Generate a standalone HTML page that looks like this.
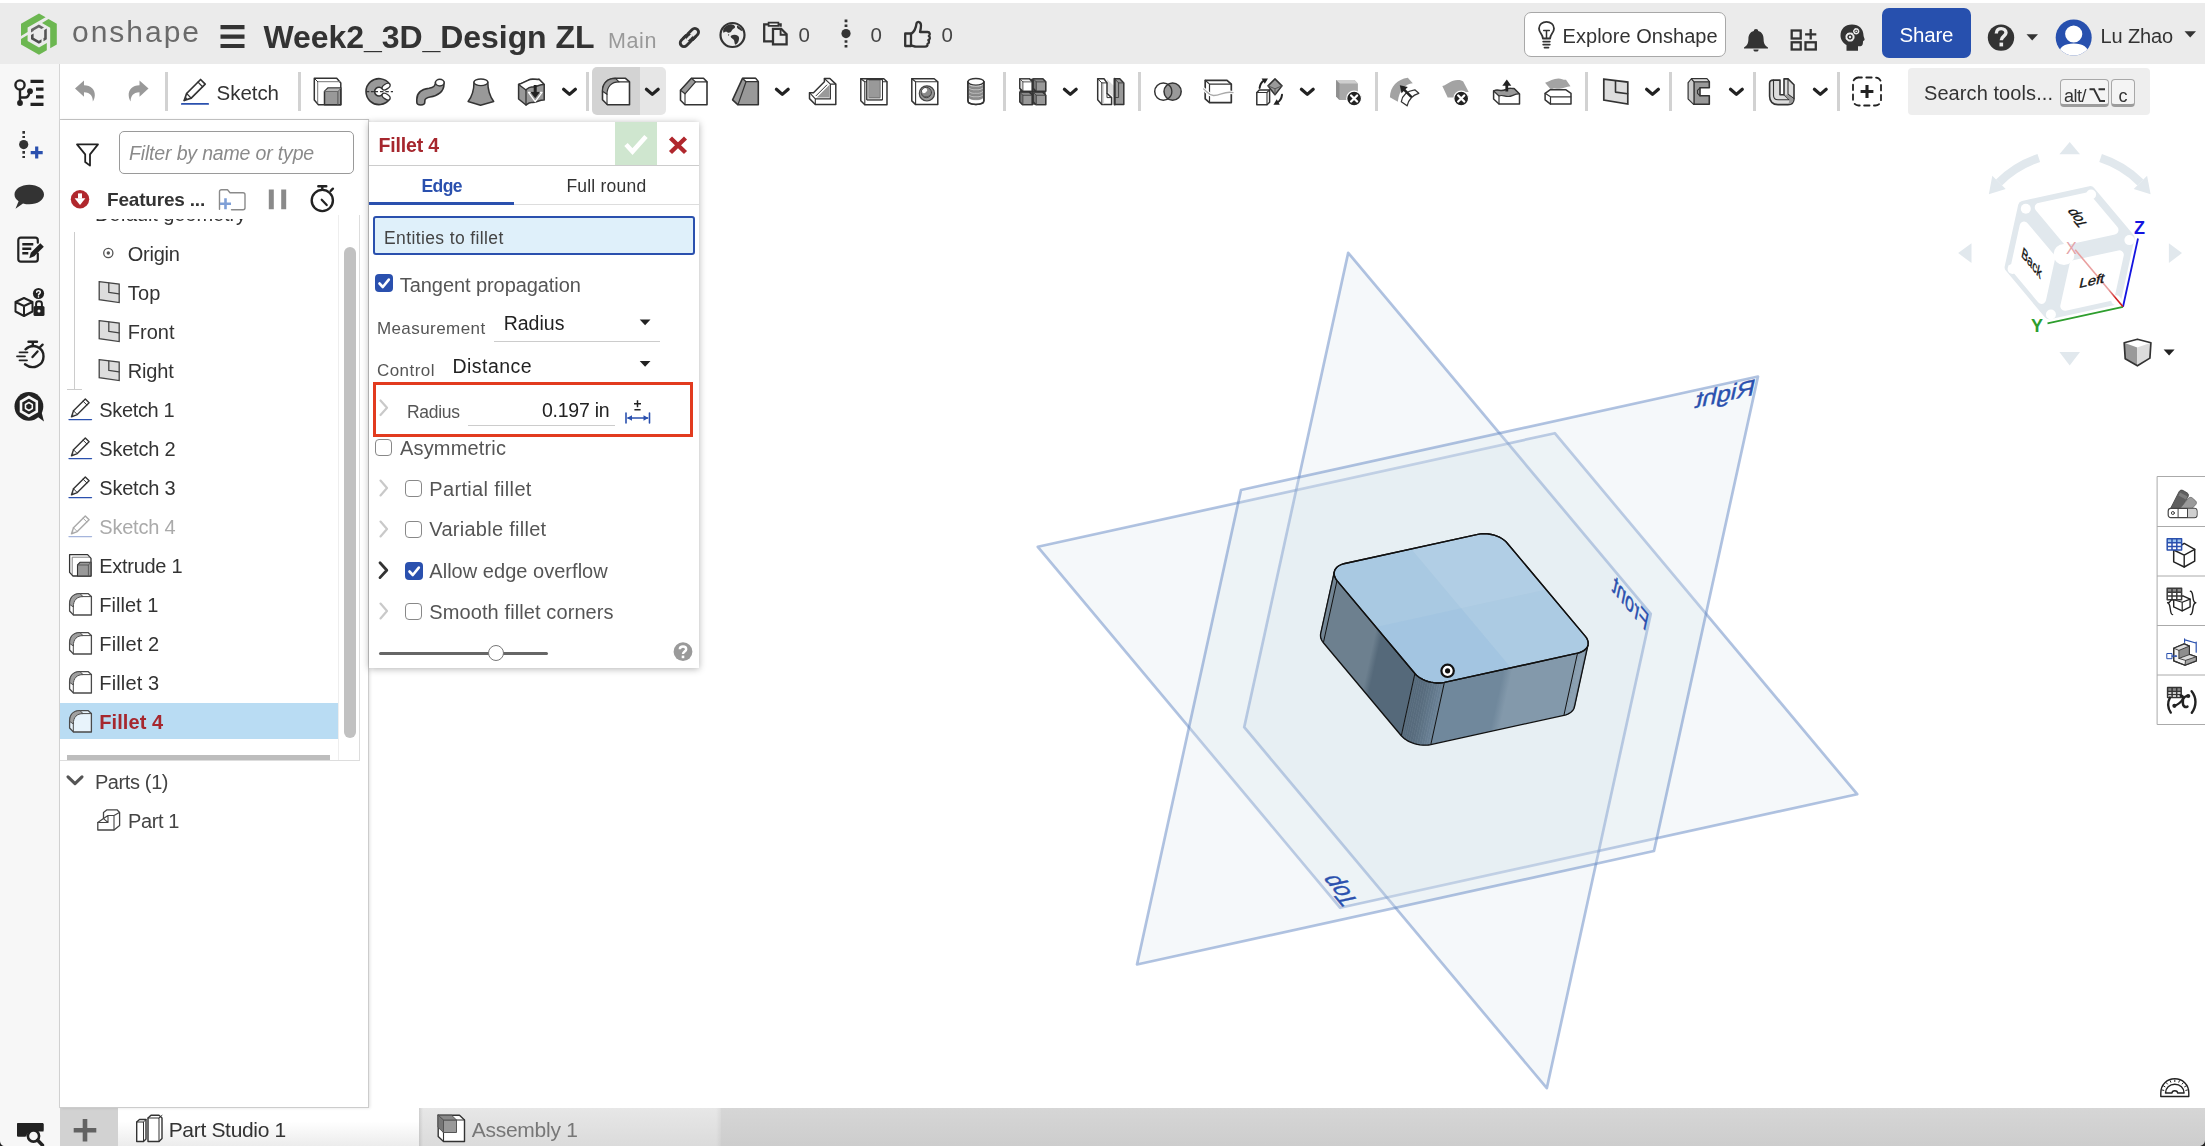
<!DOCTYPE html>
<html><head><meta charset="utf-8"><title>Onshape</title>
<style>
html,body{margin:0;padding:0}
body{width:2205px;height:1146px;position:relative;overflow:hidden;background:#fff;font-family:"Liberation Sans",sans-serif;color:#333}
.t{position:absolute;white-space:nowrap;line-height:1}
.a{position:absolute}
svg{position:absolute;left:0;top:0;overflow:visible}
.cb{position:absolute;width:15px;height:15px;border:1.5px solid #888;border-radius:4px;background:#fff}
.cbx{position:absolute;width:18px;height:18px;border-radius:4px;background:#2a50ae}
</style></head><body>
<!-- base layout -->
<div class="a" style="left:0;top:0;width:2205px;height:3px;background:#fff"></div>
<div class="a" style="left:0;top:3px;width:2205px;height:61px;background:#ebebeb"></div>
<div class="a" style="left:0;top:64px;width:60px;height:1082px;background:#f7f7f7"></div>
<div class="a" style="left:59px;top:64px;width:1px;height:1044px;background:#d6d6d6"></div>
<div class="a" style="left:60px;top:118.5px;width:309px;height:1.5px;background:#c8c8c8"></div>
<!-- bottom tab bar -->
<div class="a" style="left:60px;top:1108px;width:2145px;height:38px;background:linear-gradient(#d6d6d6,#cdcdcd)"></div>
<div class="a" style="left:60px;top:1107.5px;width:58px;height:38.5px;background:#d2d2d2"></div>
<div class="a" style="left:118px;top:1108px;width:301px;height:38px;background:linear-gradient(#fff 35%,#ececec)"></div>
<div class="a" style="left:419px;top:1108px;width:302px;height:38px;background:linear-gradient(90deg,rgba(0,0,0,.1) 0,rgba(0,0,0,0) 4px,rgba(0,0,0,0) 297px,rgba(0,0,0,.05) 302px),linear-gradient(#e7e7e7,#dbdbdb)"></div>
<!-- header widgets -->
<div class="a" style="left:1524px;top:12px;width:200px;height:43px;border:1px solid #a8a8a8;border-radius:7px;background:#fff"></div>
<div class="a" style="left:1882px;top:8px;width:89px;height:50px;border-radius:7px;background:#2750ae"></div>
<!-- toolbar: active fillet button + search box + separators -->
<div class="a" style="left:592px;top:67px;width:74px;height:48px;border-radius:5px;background:linear-gradient(90deg,#d3d3d3 0,#d3d3d3 48px,#e6e6e6 48px)"></div>
<div class="a" style="left:1908px;top:68px;width:242px;height:47px;border-radius:4px;background:#eee"></div>
<div class="a" style="left:2060px;top:79px;width:49px;height:28px;border:1px solid #a8a8a8;border-bottom:3px solid #9c9c9c;border-radius:4px;background:#f4f4f4;box-sizing:border-box"></div>
<div class="a" style="left:2110.5px;top:79px;width:24px;height:28px;border:1px solid #a8a8a8;border-bottom:3px solid #9c9c9c;border-radius:4px;background:#f4f4f4;box-sizing:border-box"></div>
<!-- toolbar separators -->
<div class="a" style="left:165.0px;top:72px;width:3px;height:39px;background:#d2d2d2"></div>
<div class="a" style="left:297.5px;top:72px;width:3px;height:39px;background:#d2d2d2"></div>
<div class="a" style="left:585.5px;top:72px;width:3px;height:39px;background:#d2d2d2"></div>
<div class="a" style="left:1002.5px;top:72px;width:3px;height:39px;background:#d2d2d2"></div>
<div class="a" style="left:1137.8px;top:72px;width:3px;height:39px;background:#d2d2d2"></div>
<div class="a" style="left:1374.9px;top:72px;width:3px;height:39px;background:#d2d2d2"></div>
<div class="a" style="left:1584.8px;top:72px;width:3px;height:39px;background:#d2d2d2"></div>
<div class="a" style="left:1669.0px;top:72px;width:3px;height:39px;background:#d2d2d2"></div>
<div class="a" style="left:1752.8px;top:72px;width:3px;height:39px;background:#d2d2d2"></div>
<div class="a" style="left:1836.6px;top:72px;width:3px;height:39px;background:#d2d2d2"></div>
<!-- 3D scene -->
<svg width="2205" height="1146" viewBox="0 0 2205 1146">
<defs>
</defs>
<path d="M1037.8,546.8 L1554.8,433.2 L1857.2,794.2 L1340.2,907.8Z" fill="rgba(214,227,235,0.255)" stroke="rgba(100,135,195,0.5)" stroke-width="2.7" stroke-linejoin="round"/>
<path d="M1348.2,252.8 L1650.8,613.8 L1546.8,1088.2 L1244.2,727.2Z" fill="rgba(214,227,235,0.255)" stroke="rgba(100,135,195,0.5)" stroke-width="2.7" stroke-linejoin="round"/>
<path d="M1241.0,490.0 L1758.0,376.5 L1654.0,851.0 L1137.0,964.5Z" fill="rgba(214,227,235,0.255)" stroke="rgba(100,135,195,0.5)" stroke-width="2.7" stroke-linejoin="round"/>
<text transform="matrix(-1.4822,-1.7689,2.5333,-0.5562,1360.0,902.9)" font-family="Liberation Sans,sans-serif" font-size="10" fill="#2a50ae" stroke="#2a50ae" stroke-width=".18">Top</text>
<text transform="matrix(-1.4822,-1.7689,-0.5096,2.3251,1646.3,631.8)" font-family="Liberation Sans,sans-serif" font-size="10" fill="#2a50ae" stroke="#2a50ae" stroke-width=".18">Front</text>
<text transform="matrix(-2.5333,0.5562,-0.5096,2.3251,1753.3,395.1)" font-family="Liberation Sans,sans-serif" font-size="10" fill="#2a50ae" stroke="#2a50ae" stroke-width=".18">Right</text>
<linearGradient id="gL" gradientUnits="userSpaceOnUse" x1="1337.0" y1="580.6" x2="1430.8" y2="601.1"><stop offset="0" stop-color="#6d808f"/><stop offset="0.505" stop-color="#6d808f"/><stop offset="0.575" stop-color="#55697a"/><stop offset="1" stop-color="#55697a"/></linearGradient>
<linearGradient id="gB" gradientUnits="userSpaceOnUse" x1="1444.4" y1="682.4" x2="1565.3" y2="708.9"><stop offset="0" stop-color="#70889c"/><stop offset="0.445" stop-color="#70889c"/><stop offset="0.515" stop-color="#8399ab"/><stop offset="1" stop-color="#8399ab"/></linearGradient>
<path d="M1337.0,580.6 L1414.9,673.5 L1401.3,735.7 L1323.4,642.7Z" fill="url(#gL)"/>
<path d="M1444.4,682.4 L1577.5,653.2 L1563.9,715.3 L1430.8,744.6Z" fill="url(#gB)"/>
<path d="M1334.3,571.8 L1334.2,572.4 L1320.5,634.5 L1320.6,633.9Z" fill="#8597a7" stroke="#8597a7" stroke-width=".6"/>
<path d="M1334.2,572.4 L1334.1,573.0 L1320.5,635.1 L1320.5,634.5Z" fill="#8395a5" stroke="#8395a5" stroke-width=".6"/>
<path d="M1334.1,573.0 L1334.1,573.6 L1320.5,635.8 L1320.5,635.1Z" fill="#8294a4" stroke="#8294a4" stroke-width=".6"/>
<path d="M1334.1,573.6 L1334.1,574.2 L1320.5,636.4 L1320.5,635.8Z" fill="#8092a2" stroke="#8092a2" stroke-width=".6"/>
<path d="M1334.1,574.2 L1334.2,574.9 L1320.6,637.0 L1320.5,636.4Z" fill="#7e90a0" stroke="#7e90a0" stroke-width=".6"/>
<path d="M1334.2,574.9 L1334.3,575.5 L1320.7,637.7 L1320.6,637.0Z" fill="#7c8f9e" stroke="#7c8f9e" stroke-width=".6"/>
<path d="M1334.3,575.5 L1334.5,576.1 L1320.9,638.3 L1320.7,637.7Z" fill="#7a8d9c" stroke="#7a8d9c" stroke-width=".6"/>
<path d="M1334.5,576.1 L1334.7,576.8 L1321.1,638.9 L1320.9,638.3Z" fill="#798b9b" stroke="#798b9b" stroke-width=".6"/>
<path d="M1334.7,576.8 L1335.0,577.4 L1321.4,639.6 L1321.1,638.9Z" fill="#778999" stroke="#778999" stroke-width=".6"/>
<path d="M1335.0,577.4 L1335.3,578.1 L1321.7,640.2 L1321.4,639.6Z" fill="#758897" stroke="#758897" stroke-width=".6"/>
<path d="M1335.3,578.1 L1335.7,578.7 L1322.1,640.9 L1321.7,640.2Z" fill="#738695" stroke="#738695" stroke-width=".6"/>
<path d="M1335.7,578.7 L1336.1,579.3 L1322.5,641.5 L1322.1,640.9Z" fill="#718493" stroke="#718493" stroke-width=".6"/>
<path d="M1336.1,579.3 L1336.6,580.0 L1322.9,642.1 L1322.5,641.5Z" fill="#708392" stroke="#708392" stroke-width=".6"/>
<path d="M1336.6,580.0 L1337.0,580.6 L1323.4,642.7 L1322.9,642.1Z" fill="#6e8190" stroke="#6e8190" stroke-width=".6"/>
<path d="M1414.9,673.5 L1416.2,674.9 L1402.6,737.1 L1401.3,735.7Z" fill="#55697a" stroke="#55697a" stroke-width=".6"/>
<path d="M1416.2,674.9 L1417.8,676.3 L1404.2,738.4 L1402.6,737.1Z" fill="#566a7b" stroke="#566a7b" stroke-width=".6"/>
<path d="M1417.8,676.3 L1419.5,677.6 L1405.9,739.7 L1404.2,738.4Z" fill="#566a7c" stroke="#566a7c" stroke-width=".6"/>
<path d="M1419.5,677.6 L1421.5,678.7 L1407.9,740.9 L1405.9,739.7Z" fill="#576b7c" stroke="#576b7c" stroke-width=".6"/>
<path d="M1421.5,678.7 L1423.6,679.8 L1409.9,741.9 L1407.9,740.9Z" fill="#576b7d" stroke="#576b7d" stroke-width=".6"/>
<path d="M1423.6,679.8 L1425.8,680.7 L1412.1,742.9 L1409.9,741.9Z" fill="#586c7d" stroke="#586c7d" stroke-width=".6"/>
<path d="M1425.8,680.7 L1428.1,681.5 L1414.4,743.6 L1412.1,742.9Z" fill="#596d7f" stroke="#596d7f" stroke-width=".6"/>
<path d="M1428.1,681.5 L1430.4,682.1 L1416.8,744.3 L1414.4,743.6Z" fill="#5b7082" stroke="#5b7082" stroke-width=".6"/>
<path d="M1430.4,682.1 L1432.8,682.6 L1419.2,744.7 L1416.8,744.3Z" fill="#5e7385" stroke="#5e7385" stroke-width=".6"/>
<path d="M1432.8,682.6 L1435.3,682.9 L1421.6,745.0 L1419.2,744.7Z" fill="#607689" stroke="#607689" stroke-width=".6"/>
<path d="M1435.3,682.9 L1437.6,683.0 L1424.0,745.2 L1421.6,745.0Z" fill="#63798c" stroke="#63798c" stroke-width=".6"/>
<path d="M1437.6,683.0 L1440.0,683.0 L1426.4,745.1 L1424.0,745.2Z" fill="#667c90" stroke="#667c90" stroke-width=".6"/>
<path d="M1440.0,683.0 L1442.3,682.8 L1428.6,744.9 L1426.4,745.1Z" fill="#687f93" stroke="#687f93" stroke-width=".6"/>
<path d="M1442.3,682.8 L1444.4,682.4 L1430.8,744.6 L1428.6,744.9Z" fill="#6b8296" stroke="#6b8296" stroke-width=".6"/>
<path d="M1577.5,653.2 L1578.7,652.9 L1565.0,715.1 L1563.9,715.3Z" fill="#849aac" stroke="#849aac" stroke-width=".6"/>
<path d="M1578.7,652.9 L1579.8,652.5 L1566.2,714.7 L1565.0,715.1Z" fill="#859bac" stroke="#859bac" stroke-width=".6"/>
<path d="M1579.8,652.5 L1580.9,652.2 L1567.3,714.3 L1566.2,714.7Z" fill="#869cae" stroke="#869cae" stroke-width=".6"/>
<path d="M1580.9,652.2 L1581.9,651.7 L1568.3,713.9 L1567.3,714.3Z" fill="#889dae" stroke="#889dae" stroke-width=".6"/>
<path d="M1581.9,651.7 L1582.9,651.2 L1569.2,713.4 L1568.3,713.9Z" fill="#899eb0" stroke="#899eb0" stroke-width=".6"/>
<path d="M1582.9,651.2 L1583.7,650.7 L1570.1,712.8 L1569.2,713.4Z" fill="#8a9fb0" stroke="#8a9fb0" stroke-width=".6"/>
<path d="M1583.7,650.7 L1584.6,650.1 L1570.9,712.2 L1570.1,712.8Z" fill="#8ba0b2" stroke="#8ba0b2" stroke-width=".6"/>
<path d="M1584.6,650.1 L1585.3,649.4 L1571.7,711.6 L1570.9,712.2Z" fill="#8ba0b1" stroke="#8ba0b1" stroke-width=".6"/>
<path d="M1585.3,649.4 L1586.0,648.8 L1572.3,710.9 L1571.7,711.6Z" fill="#899eaf" stroke="#899eaf" stroke-width=".6"/>
<path d="M1586.0,648.8 L1586.5,648.1 L1572.9,710.2 L1572.3,710.9Z" fill="#869bad" stroke="#869bad" stroke-width=".6"/>
<path d="M1586.5,648.1 L1587.0,647.3 L1573.4,709.5 L1572.9,710.2Z" fill="#8499aa" stroke="#8499aa" stroke-width=".6"/>
<path d="M1587.0,647.3 L1587.4,646.5 L1573.8,708.7 L1573.4,709.5Z" fill="#8297a8" stroke="#8297a8" stroke-width=".6"/>
<path d="M1587.4,646.5 L1587.7,645.7 L1574.1,707.9 L1573.8,708.7Z" fill="#7f94a6" stroke="#7f94a6" stroke-width=".6"/>
<path d="M1587.7,645.7 L1588.0,644.9 L1574.4,707.1 L1574.1,707.9Z" fill="#7d92a4" stroke="#7d92a4" stroke-width=".6"/>
<path d="M1334.3,571.8 L1320.6,633.9 L1320.5,635.3 L1320.6,636.8 L1320.9,638.3 L1321.5,639.8 L1322.3,641.3 L1323.4,642.7 L1401.3,735.7 L1402.9,737.3 L1404.7,738.9 L1406.9,740.3 L1409.2,741.6 L1411.8,742.7 L1414.4,743.6 L1417.2,744.4 L1420.0,744.9 L1422.8,745.1 L1425.6,745.2 L1428.3,745.0 L1430.8,744.6 L1563.9,715.3 L1565.9,714.8 L1567.8,714.1 L1569.5,713.2 L1570.9,712.2 L1572.2,711.1 L1573.2,709.9 L1573.9,708.5 L1574.4,707.1 L1588.0,644.9" fill="none" stroke="#111" stroke-width="1.35" stroke-linejoin="round"/>
<path d="M1337.0,580.6 L1323.4,642.7" stroke="#111" stroke-width="1"/>
<path d="M1414.9,673.5 L1401.3,735.7" stroke="#111" stroke-width="1"/>
<path d="M1444.4,682.4 L1430.8,744.6" stroke="#111" stroke-width="1"/>
<path d="M1577.5,653.2 L1563.9,715.3" stroke="#111" stroke-width="1"/>
<path d="M1477.8,534.3 L1480.4,533.9 L1483.0,533.7 L1485.8,533.7 L1488.6,534.0 L1491.4,534.5 L1494.2,535.2 L1496.9,536.1 L1499.4,537.2 L1501.8,538.5 L1503.9,540.0 L1505.8,541.5 L1507.3,543.2 L1585.2,636.1 L1586.5,637.8 L1587.4,639.6 L1588.0,641.4 L1588.2,643.2 L1588.0,644.9 L1587.5,646.5 L1586.6,648.0 L1585.3,649.4 L1583.8,650.6 L1581.9,651.7 L1579.8,652.5 L1577.5,653.2 L1444.4,682.4 L1441.9,682.8 L1439.2,683.0 L1436.5,683.0 L1433.6,682.7 L1430.8,682.2 L1428.1,681.5 L1425.4,680.6 L1422.8,679.4 L1420.5,678.2 L1418.4,676.7 L1416.5,675.2 L1414.9,673.5 L1337.0,580.6 L1335.8,578.8 L1334.9,577.1 L1334.3,575.3 L1334.1,573.5 L1334.3,571.8 L1334.8,570.2 L1335.7,568.7 L1336.9,567.3 L1338.5,566.0 L1340.3,565.0 L1342.4,564.1 L1344.8,563.5Z" fill="#a9c9e2" stroke="#111" stroke-width="1.35" stroke-linejoin="round"/>
<clipPath id="cf"><path d="M1477.8,534.3 L1480.4,533.9 L1483.0,533.7 L1485.8,533.7 L1488.6,534.0 L1491.4,534.5 L1494.2,535.2 L1496.9,536.1 L1499.4,537.2 L1501.8,538.5 L1503.9,540.0 L1505.8,541.5 L1507.3,543.2 L1585.2,636.1 L1586.5,637.8 L1587.4,639.6 L1588.0,641.4 L1588.2,643.2 L1588.0,644.9 L1587.5,646.5 L1586.6,648.0 L1585.3,649.4 L1583.8,650.6 L1581.9,651.7 L1579.8,652.5 L1577.5,653.2 L1444.4,682.4 L1441.9,682.8 L1439.2,683.0 L1436.5,683.0 L1433.6,682.7 L1430.8,682.2 L1428.1,681.5 L1425.4,680.6 L1422.8,679.4 L1420.5,678.2 L1418.4,676.7 L1416.5,675.2 L1414.9,673.5 L1337.0,580.6 L1335.8,578.8 L1334.9,577.1 L1334.3,575.3 L1334.1,573.5 L1334.3,571.8 L1334.8,570.2 L1335.7,568.7 L1336.9,567.3 L1338.5,566.0 L1340.3,565.0 L1342.4,564.1 L1344.8,563.5Z"/></clipPath>
<path d="M1461.1,608.3 L1546.3,589.6 L1496.5,530.2 L1411.3,548.9Z" fill="rgba(255,255,255,0.10)" clip-path="url(#cf)"/>
<path d="M1461.1,608.3 L1546.3,589.6 L1596.1,649.1 L1510.9,667.8Z" fill="rgba(255,255,255,0.045)" clip-path="url(#cf)"/>
<path d="M1461.1,608.3 L1376.0,627.0 L1425.8,686.5 L1510.9,667.8Z" fill="rgba(60,140,220,0.05)" clip-path="url(#cf)"/>
<path d="M1477.8,534.3 L1480.4,533.9 L1483.0,533.7 L1485.8,533.7 L1488.6,534.0 L1491.4,534.5 L1494.2,535.2 L1496.9,536.1 L1499.4,537.2 L1501.8,538.5 L1503.9,540.0 L1505.8,541.5 L1507.3,543.2 L1585.2,636.1 L1586.5,637.8 L1587.4,639.6 L1588.0,641.4 L1588.2,643.2 L1588.0,644.9 L1587.5,646.5 L1586.6,648.0 L1585.3,649.4 L1583.8,650.6 L1581.9,651.7 L1579.8,652.5 L1577.5,653.2 L1444.4,682.4 L1441.9,682.8 L1439.2,683.0 L1436.5,683.0 L1433.6,682.7 L1430.8,682.2 L1428.1,681.5 L1425.4,680.6 L1422.8,679.4 L1420.5,678.2 L1418.4,676.7 L1416.5,675.2 L1414.9,673.5 L1337.0,580.6 L1335.8,578.8 L1334.9,577.1 L1334.3,575.3 L1334.1,573.5 L1334.3,571.8 L1334.8,570.2 L1335.7,568.7 L1336.9,567.3 L1338.5,566.0 L1340.3,565.0 L1342.4,564.1 L1344.8,563.5Z" fill="none" stroke="#111" stroke-width="1.35" stroke-linejoin="round"/>
<circle cx="1447.6" cy="670.8" r="6.2" fill="#fff" stroke="#111" stroke-width="2.2"/><circle cx="1447.6" cy="670.8" r="2.6" fill="#111"/>
<!-- view cube -->
<g>
<path d="M2069.7,142.0 L2059.4,154.2 L2080.0,154.2Z" fill="#e1e8ed"/>
<path d="M2069.7,365.4 L2059.4,352.0 L2080.0,352.0Z" fill="#e1e8ed"/>
<path d="M1958.1,253.1 L1971.5,243.3 L1971.5,262.9Z" fill="#e1e8ed"/>
<path d="M2182.0,253.1 L2168.9,243.3 L2168.9,262.9Z" fill="#e1e8ed"/>
<path d="M2038.8,158.0 A100,100 0 0 0 1999.0,182.4" fill="none" stroke="#e1e8ed" stroke-width="8.5"/>
<path d="M1988.8,194.3 L1992.3,175.7 L2005.7,189.1Z" fill="#e1e8ed"/>
<path d="M2100.6,158.0 A100,100 0 0 1 2140.4,182.4" fill="none" stroke="#e1e8ed" stroke-width="8.5"/>
<path d="M2150.6,194.3 L2147.1,175.7 L2133.7,189.1Z" fill="#e1e8ed"/>
<path d="M2090.3,191.1 L2129.6,238.0 L2116.1,299.6 L2048.9,314.3 L2009.6,267.4 L2023.1,205.8Z" fill="#e1e8ed" stroke="#e1e8ed" stroke-width="10" stroke-linejoin="round"/>
<path d="M2039.2,207.4 L2086.4,197.1 L2114.0,230.0 L2066.8,240.4Z" fill="#fff" stroke="#fff" stroke-width="9" stroke-linejoin="round"/>
<path d="M2024.1,226.1 L2050.7,257.7 L2041.6,299.4 L2015.0,267.7Z" fill="#fff" stroke="#fff" stroke-width="9" stroke-linejoin="round"/>
<path d="M2074.0,264.7 L2119.3,254.8 L2110.2,296.4 L2064.8,306.3Z" fill="#fff" stroke="#fff" stroke-width="9" stroke-linejoin="round"/>
<circle cx="2064.0" cy="254.5" r="10.5" fill="#fff"/>
<circle cx="2129.4" cy="240.1" r="5.0" fill="#fff"/>
<circle cx="2025.8" cy="208.8" r="5.0" fill="#fff"/>
<circle cx="2050.9" cy="314.5" r="5.0" fill="#fff"/>
<circle cx="2091.1" cy="194.5" r="5.0" fill="#fff"/>
<circle cx="2116.2" cy="300.2" r="5.0" fill="#fff"/>
<circle cx="2012.6" cy="268.9" r="5.0" fill="#fff"/>
<path d="M2123.0,306.8 L2138.0,238.5" stroke="#1414e0" stroke-width="1.8"/>
<path d="M2123.0,306.8 L2047.5,323.4" stroke="#2e9e2e" stroke-width="1.8"/>
<linearGradient id="gx" gradientUnits="userSpaceOnUse" x1="2123" y1="306.8" x2="2074" y2="250"><stop offset="0" stop-color="#d02020"/><stop offset=".15" stop-color="#d02020"/><stop offset=".3" stop-color="#e9a0a0"/><stop offset="1" stop-color="#e9a0a0"/></linearGradient>
<path d="M2123.0,306.8 L2075.2,249.8" stroke="url(#gx)" stroke-width="1.6"/>
<text x="2134" y="234.2" font-family="Liberation Sans,sans-serif" font-size="18" font-weight="bold" fill="#1414e0">Z</text>
<text x="2031" y="332.3" font-family="Liberation Sans,sans-serif" font-size="18" font-weight="bold" fill="#2e9e2e">Y</text>
<text x="2066" y="253.5" font-family="Liberation Sans,sans-serif" font-size="16" fill="#e3a3a8">X</text>
<text transform="matrix(-0.8772,-1.0469,1.4993,-0.3291,2076.6,218.2)" font-family="Liberation Sans,sans-serif" font-size="10" font-weight="normal" text-anchor="middle" fill="#111" stroke="#111" stroke-width=".25" y="3.5">Top</text>
<text transform="matrix(0.8772,1.0469,-0.3016,1.3760,2031.8,262.7)" font-family="Liberation Sans,sans-serif" font-size="10" font-weight="normal" text-anchor="middle" fill="#111" stroke="#111" stroke-width=".25" y="3.5">Back</text>
<text transform="matrix(1.4993,-0.3291,-0.3016,1.3760,2092.1,280.5)" font-family="Liberation Sans,sans-serif" font-size="10" font-weight="normal" text-anchor="middle" fill="#111" stroke="#111" stroke-width=".25" y="3.5">Left</text>
<g stroke-linejoin="round"><path d="M2137.4,339.2L2150.9,342.8L2149.9,358.1L2137.4,365.8L2125.2,358.8L2124.2,342.8Z" fill="#fff"/><path d="M2124.2,342.8L2137.2,347.6L2137.4,365.8L2125.2,358.8Z" fill="#999"/><path d="M2137.2,347.6L2150.9,342.8L2149.9,358.1L2137.4,365.8Z" fill="#dcdcdc"/><path d="M2137.4,339.2L2150.9,342.8L2149.9,358.1L2137.4,365.8L2125.2,358.8L2124.2,342.8Z" fill="none" stroke="#333" stroke-width="1.7"/></g>
<path d="M2163.6,349.6H2174.6L2169.1,355.4Z" fill="#222"/>
</g>
</svg>
<!-- feature panel -->
<div class="a" style="left:60px;top:120px;width:308px;height:987px;background:#fff;border-right:1px solid #ccc;border-bottom:1px solid #ccc;box-shadow:1px 0 3px rgba(0,0,0,.12)"></div>
<div class="a" style="left:119px;top:131px;width:233px;height:41px;border:1.5px solid #9a9a9a;border-radius:5px;background:#fff"></div>
<div class="a" style="left:359px;top:215px;width:1px;height:546px;background:#ddd"></div>
<div class="a" style="left:60px;top:760px;width:300px;height:1px;background:#ddd"></div>
<!-- tree guide -->
<div class="a" style="left:74px;top:232px;width:1px;height:158px;background:#ccc"></div>
<div class="a" style="left:67px;top:389px;width:15px;height:1px;background:#ccc"></div>
<!-- selected row -->
<div class="a" style="left:60px;top:703px;width:278px;height:36px;background:#b9dcf3"></div>
<!-- scrollbars -->
<div class="a" style="left:338px;top:215px;width:1px;height:545px;background:#eee"></div>
<div class="a" style="left:344px;top:247px;width:12px;height:491px;border-radius:6px;background:#c1c1c1"></div>
<div class="a" style="left:67px;top:755px;width:263px;height:5px;background:#bdbdbd"></div>
<!-- fillet dialog -->
<div class="a" style="left:369px;top:122px;width:330px;height:546px;background:#fff;box-shadow:0 1px 7px rgba(0,0,0,.3)"></div>
<div class="a" style="left:615px;top:122px;width:42px;height:43px;background:#cfe6cf"></div>
<div class="a" style="left:369px;top:165px;width:330px;height:1px;background:#ccc"></div>
<div class="a" style="left:369px;top:204px;width:330px;height:1px;background:#ddd"></div>
<div class="a" style="left:369px;top:202px;width:145px;height:3px;background:#2a50ae"></div>
<div class="a" style="left:373px;top:216px;width:318px;height:35px;border:2px solid #2a50ae;border-radius:3px;background:#dff0fa"></div>
<div class="cbx" style="left:375px;top:274px"></div>
<div class="a" style="left:494px;top:341px;width:166px;height:1px;background:#ccc"></div>
<div class="a" style="left:373px;top:382px;width:314px;height:49px;border:3px solid #e23b1f"></div>
<div class="a" style="left:468px;top:425px;width:147px;height:1px;background:#ccc"></div>
<div class="cb" style="left:375px;top:439px"></div>
<div class="cb" style="left:405px;top:480px"></div>
<div class="cb" style="left:405px;top:521px"></div>
<div class="cbx" style="left:405px;top:562px"></div>
<div class="cb" style="left:405px;top:603px"></div>
<div class="a" style="left:379px;top:652px;width:169px;height:3px;background:#666;border-radius:2px"></div>
<div class="a" style="left:488px;top:645px;width:14px;height:14px;border:1.5px solid #777;border-radius:50%;background:#fff"></div>
<!-- icons -->
<svg width="2205" height="1146" viewBox="0 0 2205 1146" fill="none" stroke-linecap="round" stroke-linejoin="round">
<!-- onshape logo -->
<g transform="translate(21,13.5)">
 <path d="M18,0 L0,10.2 V22.5 L6.6,18.6 V14 L24.6,3.8Z" fill="#6cb751"/>
 <path d="M27.5,5.5 L35.8,10.3 V30.9 L29.2,34.7 V14.2 L21,9.4Z" fill="#6cb751"/>
 <path d="M0,25.5 V30.9 L18,41.3 L25.8,36.8 V29.6 L18,34 L6.6,27.4 V21.6Z" fill="#6cb751"/>
 <path d="M17.9,11 L10,15.6 V19 L12.6,17.5 V17 L17.9,14 L20.4,15.4 L23,13.9Z" fill="#666"/>
 <path d="M10,21.5 V25.7 L17.9,30.3 L20.5,28.8 V25.8 L17.9,27.3 L12.6,24.2 V20Z" fill="#4d4d4d"/>
 <path d="M23.2,16.5 V24.2 L22.5,24.6 V27.7 L25.8,25.8 V15Z" fill="#555"/>
</g>
<!-- hamburger -->
<path d="M220.5,27.2H244.5M220.5,36.6H244.5M220.5,46H244.5" stroke="#333" stroke-width="4.2" stroke-linecap="butt"/>
<!-- link icon -->
<g transform="translate(689.4,37.5) rotate(-45)" stroke="#333" stroke-width="2.9">
 <rect x="-11.4" y="-3.7" width="13.4" height="7.4" rx="3.7"/>
 <rect x="-2" y="-3.7" width="13.4" height="7.4" rx="3.7"/>
 <path d="M-2,-1.2V1.2M2,-1.2V1.2" stroke="#ebebeb" stroke-width="3.4" stroke-linecap="butt"/>
 <path d="M-4.5,-3.7H-1M1,3.7H4.5" stroke-width="2.9"/>
</g>
<!-- globe -->
<g transform="translate(732.5,35)">
 <circle r="12" stroke="#333" stroke-width="2.2"/>
 <path d="M-7.5,-8 C-4,-11.5 1,-11.4 2.5,-8.5 C3,-6.5 0,-6.5 -0.8,-4.2 C-1.5,-2.4 -4,-1.6 -5.2,-2.8 C-6.4,-3.8 -8,-3.2 -8.8,-2 C-10,-4 -9.4,-6.4 -7.5,-8Z M-1.5,0.8 C1.5,-1.2 6.8,0 6.6,3.2 C6.4,6 5.6,8.4 3.2,9.8 C1.4,8.6 2.6,5.6 0.6,4.2 C-1,3 -2.6,2 -1.5,0.8Z M4.8,-9.4 C7,-8.4 9.2,-6.4 10.2,-4 C8.4,-3.6 7.6,-5.6 5.8,-6 C4.6,-6.4 4,-8.4 4.8,-9.4Z M-4.2,-0.6 C-3.4,-0.8 -2.8,0 -3.6,0.6 C-4.4,0.8 -4.8,-0.2 -4.2,-0.6Z" fill="#333"/>
</g>
<!-- versions/copy icon -->
<g transform="translate(763,21.8)" stroke="#333" stroke-width="2.3" stroke-linejoin="miter" stroke-linecap="butt">
 <path d="M5.6,2.6H1.2V19.6H9"/>
 <path d="M5.6,0.9H15.4V4H5.6Z" stroke-width="1.7"/>
 <path d="M15.4,2.6H17.6V5"/>
 <path d="M10,7H18.2L23.6,12.4V22.6H10Z" fill="#ebebeb"/>
 <path d="M17.6,7V13H23.6" stroke-width="1.9"/>
</g>
<!-- branch dot -->
<g transform="translate(846,33.6)" stroke="#333">
 <circle r="4.6" fill="#333" stroke="none"/>
 <path d="M0,-14V-6.6M0,6.6V14" stroke-width="2.8" stroke-dasharray="2.6 2.2" stroke-linecap="butt"/>
</g>
<!-- thumbs up -->
<g transform="translate(904,21)" stroke="#333" stroke-width="2.3">
 <path d="M1.2,12.5H7V25H1.2Z"/>
 <path d="M7,13 C10,11 12,7 12.5,2.5 C13,0 17,0.5 17,4.5 C17,7 16.5,9 16,11 H23.5 C26,11 26.5,14 24.8,15 C26.5,16 26,18.6 24.3,19.2 C25.6,20.4 25,22.6 23.4,23 C24,24.6 23,25.6 21,25.6 H12 C10,25.6 9,24.5 7,24.5"/>
</g>
<!-- bulb -->
<g transform="translate(1546.5,22)" stroke="#333" stroke-width="1.8">
 <path d="M-3.6,16.5 C-3.6,12 -7.5,11 -7.5,6.5 C-7.5,2.5 -4,-0.2 0,-0.2 C4,-0.2 7.5,2.5 7.5,6.5 C7.5,11 3.6,12 3.6,16.5Z"/>
 <path d="M-3.3,19.6H3.3M-3.3,22.6H3.3M-2,25.6H2"/>
 <path d="M-2.8,8.6H2.8M0,8.6V16" stroke-width="1.5"/>
</g>
<!-- bell -->
<g transform="translate(1756,29)" fill="#333">
 <path d="M0,0 C1.4,0 2.2,0.8 2.2,2 C6,3 7.6,6 7.6,10 C7.6,14.5 9,16.5 12,18.6 V19.6 H-12 V18.6 C-9,16.5 -7.6,14.5 -7.6,10 C-7.6,6 -6,3 -2.2,2 C-2.2,0.8 -1.4,0 0,0Z"/>
 <path d="M-2.6,20.4H2.6C2.6,22 1.5,22.6 0,22.6C-1.5,22.6 -2.6,22 -2.6,20.4Z"/>
</g>
<!-- apps -->
<g transform="translate(1790.5,29)" stroke="#333" stroke-width="2.3" stroke-linejoin="miter" stroke-linecap="butt">
 <rect x="1.2" y="1.5" width="9" height="8"/><rect x="1.2" y="13.3" width="9" height="7.2"/><rect x="15" y="13.3" width="10.3" height="7.2"/>
 <path d="M20.2,0V10.6M14.6,5.3H25.8"/>
</g>
<!-- head with gears -->
<g transform="translate(1840,24.5)">
 <path d="M12,0 C19,0 23.5,4.5 23.5,11 C23.5,12.5 24.8,14 24.6,15.2 C24.4,16.2 23,16 23,17 C23,19.5 22.6,21.5 20.5,21.8 H18 V26.2 H6.5 V20.5 C3,18.5 0.5,15 0.5,11 C0.5,4.5 5,0 12,0Z" fill="#333"/>
 <circle cx="10" cy="12.5" r="3.6" fill="#333" stroke="#ebebeb" stroke-width="2" stroke-dasharray="1.6 1.3"/>
 <circle cx="16.2" cy="6.8" r="2.4" fill="#333" stroke="#ebebeb" stroke-width="1.6" stroke-dasharray="1.2 1"/>
 <circle cx="10" cy="12.5" r="1.2" fill="#ebebeb"/><circle cx="16.2" cy="6.8" r=".9" fill="#ebebeb"/>
</g>
<!-- help -->
<circle cx="2001" cy="37.6" r="13.2" fill="#333"/>
<path d="M1996.3,33.6 C1996.3,29.8 1999,28.6 2001.2,28.6 C2004,28.6 2006,30.3 2006,32.8 C2006,36 2001.3,36.3 2001.3,40.2" stroke="#ebebeb" stroke-width="3.4" stroke-linecap="butt"/>
<rect x="1999.5" y="42.6" width="3.6" height="3.8" fill="#ebebeb"/>
<path d="M2026.5,34.2H2038L2032.2,40.4Z" fill="#333"/>
<!-- avatar -->
<circle cx="2073.7" cy="37.5" r="18" fill="#2750ae"/>
<clipPath id="av"><circle cx="2073.7" cy="37.5" r="18"/></clipPath>
<g clip-path="url(#av)" fill="#fff"><circle cx="2073.7" cy="34" r="8.6"/><path d="M2058,58 C2058,47 2064,43.5 2073.7,43.5 C2083.4,43.5 2089.4,47 2089.4,58Z"/></g>
<path d="M2184.5,31.2H2196L2190.2,37.4Z" fill="#333"/>
<!-- toolbar icons -->
<g stroke="#333" stroke-width="1.5">
<!-- left column: tree icon -->
<g transform="translate(14,79)" stroke="#222">
 <circle cx="6" cy="6" r="4.6" stroke-width="2.4"/>
 <path d="M6,10.6V22.5M6,18.5H11C14,18.5 15,16.5 15.5,13.5" stroke-width="2.4"/>
 <circle cx="6" cy="24" r="2.9" fill="#222" stroke="none"/><circle cx="16" cy="12.2" r="2.9" fill="#222" stroke="none"/>
 <path d="M16.5,2.4H29.5M22,10.2H29.5M22,17.8H29.5M16.5,25.4H29.5" stroke-width="3.2" stroke-linecap="butt"/>
</g>
<!-- undo / redo -->
<path d="M75,88.6 L84,80.4 V85.2 C91,85.4 95.2,89.5 94.8,95.5 C94.6,98 94,99.8 92.8,101.4 C93,96.5 90.5,92.4 84,92.2 V96.8Z" fill="#999" stroke="none"/>
<path d="M148.5,88.6 L139.5,80.4 V85.2 C132.5,85.4 128.3,89.5 128.7,95.5 C128.9,98 129.5,99.8 130.7,101.4 C130.5,96.5 133,92.4 139.5,92.2 V96.8Z" fill="#999" stroke="none"/>
<!-- sketch pencil -->
<g transform="translate(181,78.5)">
 <path d="M3.2,22 L5.6,15 L19.6,1 L24.2,5.6 L10.2,19.6Z" fill="#fff" stroke-width="1.7"/>
 <path d="M5.6,15 L10.2,19.6 M3.2,22 L5.4,19.8 M17,3.6 L21.6,8.2" stroke-width="1.3"/>
 <path d="M0.8,25.4H27.2" stroke="#2a50ae" stroke-width="1.7"/>
</g>
<!-- extrude -->
<g transform="translate(314.3,78.3)">
 <path d="M0,0H22.4L26.5,4.8V26.5H4.1L0,21.8Z" fill="#fff"/>
 <path d="M3.4,24.6V3.4H25.2" stroke="#777" stroke-width="1"/><path d="M0,0L3.4,3.4" stroke-width="1"/>
 <path d="M10.2,13.2L13.6,9.8H26.5V26.5H10.2Z" fill="#999"/>
 <path d="M10.2,13.2H23.6V26.5M23.6,13.2L26.5,9.8" stroke-width="1" stroke="#555"/>
 <path d="M10.6,13L13.8,10.2H26L23.4,13Z" fill="#b5b5b5" stroke="none"/>
</g>
<!-- revolve -->
<g transform="translate(366,78.2)">
 <path d="M23.65,5.94A13,13 0 1 0 23.65,20.86L16.6,15.92A4.4,4.4 0 1 1 16.6,10.88Z" fill="#999" stroke-width="1.6"/>
 <ellipse cx="20.1" cy="8.4" rx="4.5" ry="2.5" transform="rotate(-35 20.1 8.4)" fill="#fff" stroke-width="1.3"/>
 <ellipse cx="20.1" cy="18.4" rx="4.5" ry="2.5" transform="rotate(35 20.1 18.4)" fill="#fff" stroke-width="1.3"/>
 <path d="M0.3,13.4H8.6" stroke-width="1.2" stroke-dasharray="3 1.6" stroke-linecap="butt"/>
 <path d="M8.6,13.4H27" stroke-width="1.4" stroke-dasharray="3.4 2" stroke-linecap="butt"/>
</g>
<!-- sweep -->
<g transform="translate(416,78)">
 <path d="M19.5,4 C19.5,8 18,9.5 13,10.2 C6,11 0.8,14.5 0.8,21.5 V24 C0.8,28 8.8,28 8.8,24 V23 C8.8,20.5 10,19.6 14,19 C22,18 28,13.5 28,6 V4Z" fill="#999" stroke-width="1.6"/>
 <ellipse cx="23.8" cy="4.6" rx="4.3" ry="3.4" fill="#fff" stroke-width="1.4"/>
</g>
<!-- loft -->
<g transform="translate(467.5,78.5)">
 <path d="M6.5,3.5 C6.5,12 4.5,18 0.6,23 L13,26.8 L26.2,23 C22.5,18 20.3,12 20.3,3.5Z" fill="#999" stroke-width="1.5"/>
 <ellipse cx="13.4" cy="3.8" rx="6.9" ry="3.3" fill="#fff" stroke-width="1.4"/>
</g>
<!-- thicken -->
<g transform="translate(518,78.5)">
 <path d="M0.6,6 C5,4.5 8,2.6 12,1 C15,0 19,1.5 21,0.8 L26.2,6 V21.5 C22,21 18,24.5 14,24 C11,23.7 10,25 8,26.5 L0.6,20.5Z" fill="#999" stroke-width="1.5"/>
 <path d="M0.6,6 C5,4.5 8,2.6 12,1 C15,0 19,1.5 21,0.8 L26.2,6 C22,5.5 18,9 14,8.5 C11,8.2 10,9.6 8,11.5Z" fill="#fff" stroke-width="1.4"/>
 <path d="M8,11.5V26.5" stroke-width="1.3"/>
 <path d="M10.5,13.8H24L17.2,23.2Z" fill="#999" stroke="#fff" stroke-width="1.3"/>
 <path d="M17.2,6.5V14.5" stroke="#222" stroke-width="3" stroke-linecap="butt"/><path d="M12.2,13.2H22.2L17.2,19.8Z" fill="#222" stroke="none"/>
</g>
<!-- fillet -->
<g transform="translate(602.5,78.3)">
 <path d="M0,13 C0,5 5,0 13,0 H23 L27,3.6 V26.5 H5 L0,21.5Z" fill="#fff" stroke-width="1.6"/>
 <path d="M0,13 C0,5 5,0 13,0 L16.5,3.6 C9,3.6 4.5,8 4.5,16Z" fill="#999" stroke-width="1.2"/>
 <path d="M16.5,3.6H27M4.5,16V26.2" stroke-width="1.1"/>
</g>
<!-- chamfer -->
<g transform="translate(680.5,78.3)">
 <path d="M0,12 L11,0 H23 L26.5,3.6 V26.5 H4.5 L0,22Z" fill="#fff" stroke-width="1.6"/>
 <path d="M0,12 L11,0 L15,3.6 L4.5,15.5Z" fill="#999" stroke-width="1.2"/>
 <path d="M15,3.6H26.5M4.5,15.5V26.2" stroke-width="1.1"/>
</g>
<!-- draft -->
<g transform="translate(732,78.3)">
 <path d="M10.5,0H23.5L26.3,3.4V26.5H6L0.6,21.6Z" fill="#999" stroke-width="1.6"/>
 <path d="M10.5,0H23.5L26.3,3.4H14Z" fill="#fff" stroke-width="1.2"/>
 <path d="M14,3.4L6,26.3" stroke-width="1.2"/>
</g>
<!-- rib -->
<g transform="translate(809,78)">
 <path d="M15.4,0.5H20.9L26.8,6.1V26.5H6.3L0.5,20.6V14.7H4.5L15.4,3.8Z" fill="#fff" stroke-width="1.5"/>
 <path d="M7.8,19.4L20.6,6.8V19.4Z" fill="#999" stroke="none"/>
 <path d="M20.6,6.6H21.5V20.2H7.2L7.8,19.4H20.6Z" fill="#c9c9c9" stroke="none"/>
 <path d="M0.5,14.7L6.3,20.9H21.4V6.1H26.6M15.4,0.5L21.4,6.1M6.3,20.9V26.3" stroke-width="1.1"/>
 <path d="M7,17.8L17.8,7" stroke-width="1"/>
</g>
<!-- shell -->
<g transform="translate(860.3,78.2)">
 <path d="M0.5,0.5H23.5L26.7,3.6V26.6H4.5L0.5,22.6Z" fill="#fff" stroke-width="1.5"/>
 <path d="M4.5,3.6V26.4M4.5,3.6H26.5M0.5,0.5L4.5,3.6" stroke-width="1.1"/>
 <path d="M6.9,1.4H22.2V21.7H6.9Z" fill="#fff" stroke-width="1"/>
 <path d="M6.9,1.4H9.2V19.4H19.9V21.7H6.9Z" fill="#c6c6c6" stroke="none"/>
 <path d="M9.2,1.9H19.9V19.4H9.2Z" fill="#999" stroke="#666" stroke-width=".8"/>
 <path d="M6.9,1.4H22.2V21.7H6.9Z" fill="none" stroke-width="1"/>
</g>
<!-- hole -->
<g transform="translate(911.3,78.2)">
 <path d="M0.5,0.5H22.9L26.5,3.6V26.4H4.3L0.5,22.7Z" fill="#fff" stroke-width="1.5"/>
 <path d="M4.3,3.6V26.2M4.3,3.6H26.3M0.5,0.5L4.3,3.6" stroke-width="1.1"/>
 <circle cx="15.6" cy="15.2" r="7.6" fill="#999" stroke="#444" stroke-width="1.2"/>
 <circle cx="15" cy="14.3" r="5.2" fill="#8a8a8a" stroke="#444" stroke-width="1"/>
 <ellipse cx="13.3" cy="12.5" rx="2.9" ry="2.1" transform="rotate(-40 13.3 12.5)" fill="#fff" stroke="none"/>
 <path d="M10.6,16.2C12.2,19.4 17,19.6 19.2,16.4" stroke="#555" stroke-width="1" fill="none"/>
</g>
<!-- external thread -->
<g transform="translate(967.3,78)">
 <path d="M0.6,3.8V22.6C0.6,27.8 16.6,27.8 16.6,22.6V3.8Z" fill="#fff" stroke-width="1.5"/>
 <path d="M0.9,6.2C2.6,9.6 14.6,9.6 16.3,6.2V8.8C14.6,12.2 2.6,12.2 0.9,8.8ZM0.9,9.7C2.6,13.1 14.6,13.1 16.3,9.7V12.3C14.6,15.7 2.6,15.7 0.9,12.3ZM0.9,13.2C2.6,16.6 14.6,16.6 16.3,13.2V15.8C14.6,19.2 2.6,19.2 0.9,15.8ZM0.9,16.7C2.6,20.1 14.6,20.1 16.3,16.7V19.3C14.6,22.7 2.6,22.7 0.9,19.3Z" fill="#8c8c8c" stroke="#666" stroke-width=".4"/>
 <ellipse cx="8.6" cy="3.8" rx="8" ry="3.3" fill="#fff" stroke-width="1.4"/>
 <path d="M0.6,3.8V22.6C0.6,27.8 16.6,27.8 16.6,22.6V3.8" fill="none" stroke-width="1.5"/>
</g>
<!-- pattern -->
<g transform="translate(1019.3,78.3)">
<path d="M0.5,0.5H23.4L26.4,3.4V26.4H3.4L0.5,23.4Z" fill="#444" stroke="none"/>
<g transform="translate(0,0)"><path d="M0.5,0.5H10L13,3.4V13H3.4L0.5,10Z" fill="#fff" stroke-width="1.3"/><path d="M0.5,0.5H10L13,3.4H3.6Z" fill="#eee" stroke="none"/><path d="M0.5,0.5L3.6,3.4V13L0.5,10Z" fill="#ddd" stroke="none"/><path d="M0.5,0.5H10L13,3.4V13H3.4L0.5,10Z" fill="none" stroke-width="1.3"/><path d="M0.5,0.5L3.6,3.6H13M3.6,3.6V13" stroke-width=".9" stroke="#444"/></g>
<g transform="translate(13.4,0)"><path d="M0.5,0.5H10L13,3.4V13H3.4L0.5,10Z" fill="#999" stroke-width="1.3"/><path d="M0.5,0.5H10L13,3.4H3.6Z" fill="#8a8a8a" stroke="none"/><path d="M0.5,0.5L3.6,3.4V13L0.5,10Z" fill="#777" stroke="none"/><path d="M0.5,0.5H10L13,3.4V13H3.4L0.5,10Z" fill="none" stroke-width="1.3"/><path d="M0.5,0.5L3.6,3.6H13M3.6,3.6V13" stroke-width=".9" stroke="#444"/></g>
<g transform="translate(0,13.4)"><path d="M0.5,0.5H10L13,3.4V13H3.4L0.5,10Z" fill="#999" stroke-width="1.3"/><path d="M0.5,0.5H10L13,3.4H3.6Z" fill="#8a8a8a" stroke="none"/><path d="M0.5,0.5L3.6,3.4V13L0.5,10Z" fill="#777" stroke="none"/><path d="M0.5,0.5H10L13,3.4V13H3.4L0.5,10Z" fill="none" stroke-width="1.3"/><path d="M0.5,0.5L3.6,3.6H13M3.6,3.6V13" stroke-width=".9" stroke="#444"/></g>
<g transform="translate(13.4,13.4)"><path d="M0.5,0.5H10L13,3.4V13H3.4L0.5,10Z" fill="#999" stroke-width="1.3"/><path d="M0.5,0.5H10L13,3.4H3.6Z" fill="#8a8a8a" stroke="none"/><path d="M0.5,0.5L3.6,3.4V13L0.5,10Z" fill="#777" stroke="none"/><path d="M0.5,0.5H10L13,3.4V13H3.4L0.5,10Z" fill="none" stroke-width="1.3"/><path d="M0.5,0.5L3.6,3.6H13M3.6,3.6V13" stroke-width=".9" stroke="#444"/></g>
</g>
<!-- mirror -->
<g transform="translate(1097.2,78.3)">
 <path d="M9.8,1L16.6,7.5V19L9.8,13Z" fill="#ddd" stroke="none"/>
 <path d="M0.5,0.5H6.8L9.8,4.6V15L14.4,19.3V26.1H4.6L0.5,21.5Z" fill="#fff" stroke-width="1.5"/>
 <path d="M5.3,4.8H6.9V25.8H5.3Z" fill="#d8d8d8" stroke="none"/>
 <path d="M0.5,0.5L4.6,4.6H9.6M4.6,4.6V26M9.8,15L9.8,19.3H14.2" stroke-width="1"/>
 <path d="M17.4,0.5H22.6L26.6,4.6V26.1H17.4Z" fill="#999" stroke-width="1.5"/>
 <path d="M17.4,0.5L21.4,4.6H26.4M21.4,4.6V19.2H17.6" stroke="#444" stroke-width="1"/>
 <path d="M17.4,0.5V26.1" stroke-width="2"/>
</g>
<!-- boolean -->
<g transform="translate(1154,82.3)">
 <circle cx="9.3" cy="9.3" r="8.6" fill="#fff" stroke-width="1.5"/>
 <circle cx="18.6" cy="9.3" r="8.6" fill="#999" stroke-width="1.5"/>
 <path d="M13.95,2.1 A8.6,8.6 0 0 1 13.95,16.5" stroke-width="1.3"/>
</g>
<!-- split -->
<g transform="translate(1204.5,79.6)">
 <path d="M0.7,0.7H22.5L26.8,4.5V23H5L0.7,19.2Z" fill="#fff" stroke-width="1.7"/>
 <path d="M5,4.5V22.8M5,4.5H26.6M0.7,0.7L5,4.5" stroke-width="1.2"/>
 <path d="M-0.8,9.4C3,12.4 4,15.6 9,15.9C16,16.1 20,11 28.5,13" stroke="#fff" stroke-width="3.4"/>
 <path d="M-0.8,9.4C3,12.4 4,15.6 9,15.9C16,16.1 20,11 28.5,13" stroke="#aaa" stroke-width="1.3"/>
</g>
<!-- transform -->
<g transform="translate(1256,78.3)">
 <path d="M0.8,14.2L3.3,11.6H13.6V24L11,26.5H0.8Z" fill="#fff" stroke-width="1.5"/>
 <path d="M0.8,14.2H11V26.3M11,14.2L13.6,11.6" stroke-width="1.1"/>
 <path d="M19,0.6L26,7.6L19,16.5L12,7.6Z" fill="#999" stroke-width="1.5"/>
 <path d="M12.2,7.6L19,10.5L25.8,7.6M19,10.5V16.2" stroke="#555" stroke-width="1"/>
 <path d="M3.6,9.6C4,6 5.6,3.6 8.2,2" stroke="#222" stroke-width="2"/><path d="M5.6,0.2H12L8.8,5.4Z" fill="#222" stroke="none"/>
 <path d="M26,16.5C25.6,20 24,22.5 21.4,24.2" stroke="#222" stroke-width="2"/><path d="M23.8,26.4H17.4L20.8,21Z" fill="#222" stroke="none"/>
</g>
<!-- delete part -->
<g transform="translate(1335.5,79.5)">
 <path d="M0.6,0.6H19L22.4,4V20.5H4L0.6,17Z" fill="#a8a8a8" stroke="none"/>
 <path d="M0.6,0.6H19L22.4,4H4Z" fill="#cfcfcf" stroke="none"/><path d="M0.6,0.6L4,4V20.5L0.6,17Z" fill="#8f8f8f" stroke="none"/>
 <circle cx="18.6" cy="19" r="7.4" fill="#222" stroke="#fff" stroke-width="1.2"/>
 <path d="M15.6,16L21.6,22M21.6,16L15.6,22" stroke="#fff" stroke-width="2.3"/>
</g>
<!-- modify fillet -->
<g transform="translate(1389.3,77.3)">
 <path d="M0.6,20C1,9 8,2 18.5,0.4L23.5,6C16,7 10,12 8.5,24.5Z" fill="#a3a3a3" stroke="none"/>
 <path d="M12,24.5C13,18 18,13.5 25.5,12.5L29.5,16C24,17.5 19.5,21.5 17.8,28.5Z" fill="#fff" stroke-width="1.3"/>
 <path d="M21.5,19L13.5,11" stroke="#222" stroke-width="2.6"/><path d="M10.5,8L18.5,9.6L12.2,16Z" fill="#222" stroke="none"/>
</g>
<!-- delete face -->
<g transform="translate(1441.7,79.5)">
 <path d="M0.6,6.5C6,5 9,0.4 16,0.4C19,0.4 20.5,1 21.5,2L27,12.5C21,12 17,13.5 13.5,18L6,18Z" fill="#a3a3a3" stroke="none"/>
 <circle cx="19.5" cy="19" r="7.4" fill="#222" stroke="#fff" stroke-width="1.2"/>
 <path d="M16.5,16L22.5,22M22.5,16L16.5,22" stroke="#fff" stroke-width="2.3"/>
</g>
<!-- move face -->
<g transform="translate(1493,79.5)">
 <path d="M0.6,11.5C5,9 8,13 13,10C16,8 19,9.5 21,9L26.5,14.5V24.5H6L0.6,19.5Z" fill="#fff" stroke-width="1.5"/>
 <path d="M0.6,11.5C5,9 8,13 13,10C16,8 19,9.5 21,9L26.5,14.5C22,14 19,17 15.5,17C11,17 9,15 6,16.5Z" fill="#999" stroke-width="1.2"/>
 <path d="M6,16.5V24.3" stroke-width="1.2"/>
 <path d="M13.8,12V5" stroke="#222" stroke-width="2.8" stroke-linecap="butt"/><path d="M9.3,6.2H18.3L13.8,0Z" fill="#222" stroke="none"/>
</g>
<!-- replace face -->
<g transform="translate(1544.5,78.3)">
 <path d="M0.6,4.5C5,3 9,0.2 14,0.2C17,0.2 19,1.8 21.5,1.5L26,8C22,8 19,10.5 15,10.5C11,10.5 9,9.5 6.5,11.5Z" fill="#a3a3a3" stroke="none"/>
 <path d="M0.6,15L5.5,11.5H21.5L26.5,15V25.8H6L0.6,21.5Z" fill="#fff" stroke-width="1.5"/>
 <path d="M0.6,15L6,18.5H26.3M6,18.5V25.6" stroke-width="1.2"/>
</g>
<!-- plane -->
<g transform="translate(1603,78.5)">
 <path d="M0.8,0.6L24.8,3.6V25.6L0.8,21.6Z" fill="#ddd" stroke-width="1.7" stroke-linejoin="miter"/>
 <path d="M12.5,2.2V13.6L24.6,15.2" stroke-width="1.6"/>
</g>
<!-- frame -->
<g transform="translate(1687.5,78.3)">
 <path d="M4,0.6H19.5L21.8,3.5V9.5H12.5V17.5H21.8V26H6.5L0.8,20.5V4.5Z" fill="#999" stroke-width="1.6"/>
 <path d="M4,0.6L6.5,3.5V26" stroke-width="1.1"/>
 <path d="M6.5,3.5H21.6" stroke-width="1.1"/>
 <path d="M4.2,1H19.2L21.2,3.4H6.6Z" fill="#ddd" stroke="none"/>
 <path d="M1.2,4.8L3.8,1.2L6.2,3.8V25.4L1.2,20.4Z" fill="#ccc" stroke="none"/>
 <path d="M4,0.6L6.5,3.5V26M6.5,3.5H21.6M12.5,9.5L10,12V15L12.5,17.5" stroke-width="1.1"/>
</g>
<!-- sheet metal -->
<g transform="translate(1769,78.3)">
 <path d="M0.6,5C0.6,2.5 2,1.8 4,1.8H11V16.5H15V0.6H19L25,6.5V20C25,24.5 22.5,26.3 19,26.3H9C3.5,26.3 0.6,23 0.6,18Z" fill="#ddd" stroke-width="1.6"/>
 <path d="M4.5,1.8V17C4.5,20 6.5,21.5 9,21.5H20.5M15,16.5L20.5,21.5M19,0.6V16L25,20.5" stroke-width="1.1"/>
 <path d="M15,16.5H19L24.5,20.8C24.5,24 22.5,25.8 19.5,25.8L20.5,21.5Z" fill="#999" stroke="none"/>
</g>
<!-- insert -->
<g transform="translate(1852,76.5)">
 <rect x="1" y="1" width="28" height="28" rx="5.5" stroke-width="1.8" stroke-dasharray="5.4 4.4" stroke-dashoffset="2" stroke="#222"/>
 <path d="M15,8.6V21.4M8.6,15H21.4" stroke="#222" stroke-width="3.1" stroke-linecap="butt"/>
</g>
<!-- chevrons -->
<g stroke="#222" stroke-width="3.2" stroke-linecap="round" stroke-linejoin="round">
 <path d="M563.6,89.2L569.5,94.4L575.4,89.2"/>
 <path d="M646.4,89.2L652.3,94.4L658.2,89.2"/>
 <path d="M776.4,89.2L782.3,94.4L788.2,89.2"/>
 <path d="M1064.4,89.2L1070.3,94.4L1076.2,89.2"/>
 <path d="M1301.4,89.2L1307.3,94.4L1313.2,89.2"/>
 <path d="M1646.6,89.2L1652.5,94.4L1658.4,89.2"/>
 <path d="M1730.5,89.2L1736.4,94.4L1742.3,89.2"/>
 <path d="M1814.4,89.2L1820.3,94.4L1826.2,89.2"/>
</g>
</g>
<!-- left column icons -->
<g stroke="#333" stroke-width="1.5">
<g transform="translate(23.7,144.6)"><circle r="4.6" fill="#333" stroke="none"/><path d="M0,-13.5V-6.5M0,6.5V13.5" stroke-width="2.6" stroke-dasharray="2.6 2.2" stroke-linecap="butt"/><path d="M13,2V14M7,8H19" stroke="#2a50ae" stroke-width="3.2" stroke-linecap="butt"/></g>
<path d="M29.3,184.7C37.5,184.7 44,189 44,194.5C44,200 37.5,204.3 29.3,204.3C27,204.3 25,204 23,203.4L15.5,208.7L18.6,201.2C16,199.5 14.5,197.2 14.5,194.5C14.5,189 21,184.7 29.3,184.7Z" fill="#333" stroke="none"/>
<g transform="translate(17.3,236.7)" stroke="#222"><path d="M20.5,17V22.5C20.5,24 19.5,25 18,25H3.5C2,25 1,24 1,22.5V3.5C1,2 2,1 3.5,1H18C19.5,1 20.5,2 20.5,3.5V6" stroke-width="2.2"/><path d="M5,7.5H16M5,12H14M5,16.5H11" stroke-width="2.4" stroke-linecap="butt"/><path d="M12,21.5L13.5,16L23,6.5L26.5,10L17,19.5Z" fill="#222" stroke="none"/></g>
<g transform="translate(14.5,287.5)" stroke="#222"><path d="M1,14.5L9.5,10.5L18,14.5V24L9.5,28.5L1,24Z M1,14.5L9.5,18.5L18,14.5M9.5,18.5V28.5" stroke-width="2"/><circle cx="24" cy="6" r="5.6" fill="#222" stroke="none"/><path d="M22.2,4.8C22.2,2.6 25.8,2.6 25.8,4.8C25.8,6 24,6.2 24,7.6M24,9.2V9.6" stroke="#f7f7f7" stroke-width="1.5"/><rect x="19" y="18.5" width="11" height="10" rx="1.5" fill="#222" stroke="none"/><path d="M21.6,18.5V16.2C21.6,13 27.4,13 27.4,16.2V18.5" stroke-width="2"/><circle cx="24.5" cy="23.4" r="1.5" fill="#f7f7f7" stroke="none"/></g>
<g transform="translate(16,340.5)" stroke="#222"><path d="M9.5,8.8C17,2 27.5,7 27.5,16C27.5,25 17,30 9,23.8" stroke-width="2.4"/><path d="M12.5,1.2H21M16.8,1.2V5.5M24.2,6.5L26.6,4.2" stroke-width="2.4"/><path d="M16.5,16.5L21.5,11" stroke-width="2.4"/><path d="M3.5,11.8H11.5M1,15.8H9M3.5,19.8H11" stroke-width="1.8"/></g>
<g transform="translate(14.5,392)"><circle cx="14.4" cy="14.4" r="14.4" fill="#222" stroke="none"/><path d="M22,24L29.5,29.5L27,20Z" fill="#222" stroke="none"/><path d="M14.4,5L6.5,9.5V19.5L14.4,24L22.3,19.5V9.5Z" stroke="#f7f7f7" stroke-width="2.6" stroke-linejoin="miter"/><path d="M14.4,10.5L11,12.5V16.5L14.4,18.5L17.8,16.5V12.5Z" stroke="#f7f7f7" stroke-width="1.6"/></g>
<!-- bottom-left search icon -->
<g transform="translate(16.5,1122.5)" stroke="#222"><path d="M2,0.5H25.5C26.5,0.5 27,1 27,2V8H0.5V2C0.5,1 1,0.5 2,0.5ZM0.5,8V12.5C0.5,13.5 1,14 2,14H9" fill="#222" stroke="none"/><path d="M0.5,2C0.5,1 1,0.5 2,0.5H25.5C26.5,0.5 27,1 27,2V9H16C12,9 10,11 10,14H2C1,14 0.5,13.5 0.5,12.5Z" fill="#222" stroke="none"/><circle cx="17" cy="13.5" r="5.6" fill="#f7f7f7" stroke-width="2.6"/><path d="M21.2,17.8L26,22.8" stroke-width="3.4"/></g>
<!-- panel: filter funnel -->
<path d="M77,144.4H98L90,154.4V165.6L85.2,162V154.4Z" stroke="#222" stroke-width="1.8" fill="#fff"/>
<!-- features header icons -->
<circle cx="80" cy="199.2" r="9.2" fill="#b0272d" stroke="none"/><path d="M80,193.4V198.6" stroke="#fff" stroke-width="4" stroke-linecap="butt"/><path d="M74.6,198.2H85.4L80,205Z" fill="#fff" stroke="none"/>
<g transform="translate(218.5,188.8)"><path d="M1,20.5V3C1,1.8 1.8,1 3,1H9L11.5,4H24.5C25.7,4 26.5,4.8 26.5,6V19C26.5,20.2 25.7,21 24.5,21H13" stroke="#8a8a8a" stroke-width="1.4"/><path d="M7,9.5V20.5M1.5,15H12.5" stroke="#7f9fd6" stroke-width="2.6" stroke-linecap="butt"/></g>
<path d="M271.3,189.5V209.3M283.7,189.5V209.3" stroke="#8a8a8a" stroke-width="5" stroke-linecap="butt"/>
<g transform="translate(322.3,200.5)" stroke="#222"><circle r="10.6" stroke-width="2.4"/><path d="M-4,-14.2H4M0,-14.2V-10.6M8.4,-9.6L10.6,-11.8" stroke-width="2.4"/><path d="M-0.6,-0.8L4.4,4.6" stroke-width="2.2"/></g>
<!-- origin icon -->
<circle cx="108.3" cy="253" r="4.6" stroke="#555" stroke-width="1.3" fill="#fff"/><circle cx="108.3" cy="253" r="1.7" fill="#555" stroke="none"/>
<!-- tree icons -->
<g transform="translate(98.5,281)"><path d="M0.7,0.7L20.7,3V21.6L0.7,18.6Z" fill="#ddd" stroke="#444" stroke-width="1.3" stroke-linejoin="miter"/><path d="M10.3,2V11.4L20.5,12.8" stroke="#444" stroke-width="1.3"/></g>
<g transform="translate(98.5,320)"><path d="M0.7,0.7L20.7,3V21.6L0.7,18.6Z" fill="#ddd" stroke="#444" stroke-width="1.3" stroke-linejoin="miter"/><path d="M10.3,2V11.4L20.5,12.8" stroke="#444" stroke-width="1.3"/></g>
<g transform="translate(98.5,359)"><path d="M0.7,0.7L20.7,3V21.6L0.7,18.6Z" fill="#ddd" stroke="#444" stroke-width="1.3" stroke-linejoin="miter"/><path d="M10.3,2V11.4L20.5,12.8" stroke="#444" stroke-width="1.3"/></g>
<g transform="translate(68.7,398)" opacity="1"><path d="M2.8,18.8L4.8,12.8L16.6,1L20.4,4.8L8.6,16.6Z" fill="#fff" stroke="#333" stroke-width="1.4"/><path d="M4.8,12.8L8.6,16.6M2.8,18.8L4.6,17M14.4,3.2L18.2,7" stroke="#333" stroke-width="1"/><path d="M0.3,21.6H22.8" stroke="#2a50ae" stroke-width="1.4"/></g>
<g transform="translate(68.7,437)" opacity="1"><path d="M2.8,18.8L4.8,12.8L16.6,1L20.4,4.8L8.6,16.6Z" fill="#fff" stroke="#333" stroke-width="1.4"/><path d="M4.8,12.8L8.6,16.6M2.8,18.8L4.6,17M14.4,3.2L18.2,7" stroke="#333" stroke-width="1"/><path d="M0.3,21.6H22.8" stroke="#2a50ae" stroke-width="1.4"/></g>
<g transform="translate(68.7,476)" opacity="1"><path d="M2.8,18.8L4.8,12.8L16.6,1L20.4,4.8L8.6,16.6Z" fill="#fff" stroke="#333" stroke-width="1.4"/><path d="M4.8,12.8L8.6,16.6M2.8,18.8L4.6,17M14.4,3.2L18.2,7" stroke="#333" stroke-width="1"/><path d="M0.3,21.6H22.8" stroke="#2a50ae" stroke-width="1.4"/></g>
<g transform="translate(68.7,515)" opacity="0.42"><path d="M2.8,18.8L4.8,12.8L16.6,1L20.4,4.8L8.6,16.6Z" fill="#fff" stroke="#333" stroke-width="1.4"/><path d="M4.8,12.8L8.6,16.6M2.8,18.8L4.6,17M14.4,3.2L18.2,7" stroke="#333" stroke-width="1"/><path d="M0.3,21.6H22.8" stroke="#2a50ae" stroke-width="1.4"/></g>
<g transform="translate(69,554)"><path d="M0.6,0.6H18.6L22,4.4V22H4L0.6,18.4Z" fill="#fff" stroke="#333" stroke-width="1.3"/><path d="M3.2,20.2V3.2H20.6" stroke="#777" stroke-width=".9"/><path d="M8.5,11L11.2,8.2H22V22H8.5Z" fill="#999" stroke="#333" stroke-width="1.1"/><path d="M8.5,11H19.4V22M19.4,11L22,8.2" stroke="#555" stroke-width=".9"/></g>
<g transform="translate(69,593)"><path d="M0.6,11C0.6,4.5 4.5,0.6 11,0.6H19L22.4,3.6V22H4.5L0.6,18Z" fill="#fff" stroke="#4a4a4a" stroke-width="1.3"/><path d="M0.6,11C0.6,4.5 4.5,0.6 11,0.6L14,3.6C8,3.6 4.3,7 4.3,13.5Z" fill="#a0a0a0" stroke="#4a4a4a" stroke-width="1"/><path d="M14,3.6H22.2M4.3,13.5V21.8" stroke="#4a4a4a" stroke-width="1"/></g>
<g transform="translate(69,632)"><path d="M0.6,11C0.6,4.5 4.5,0.6 11,0.6H19L22.4,3.6V22H4.5L0.6,18Z" fill="#fff" stroke="#4a4a4a" stroke-width="1.3"/><path d="M0.6,11C0.6,4.5 4.5,0.6 11,0.6L14,3.6C8,3.6 4.3,7 4.3,13.5Z" fill="#a0a0a0" stroke="#4a4a4a" stroke-width="1"/><path d="M14,3.6H22.2M4.3,13.5V21.8" stroke="#4a4a4a" stroke-width="1"/></g>
<g transform="translate(69,671)"><path d="M0.6,11C0.6,4.5 4.5,0.6 11,0.6H19L22.4,3.6V22H4.5L0.6,18Z" fill="#fff" stroke="#4a4a4a" stroke-width="1.3"/><path d="M0.6,11C0.6,4.5 4.5,0.6 11,0.6L14,3.6C8,3.6 4.3,7 4.3,13.5Z" fill="#a0a0a0" stroke="#4a4a4a" stroke-width="1"/><path d="M14,3.6H22.2M4.3,13.5V21.8" stroke="#4a4a4a" stroke-width="1"/></g>
<g transform="translate(69,710)"><path d="M0.6,11C0.6,4.5 4.5,0.6 11,0.6H19L22.4,3.6V22H4.5L0.6,18Z" fill="#e8f3fb" stroke="#4a4a4a" stroke-width="1.3"/><path d="M0.6,11C0.6,4.5 4.5,0.6 11,0.6L14,3.6C8,3.6 4.3,7 4.3,13.5Z" fill="#a0a0a0" stroke="#4a4a4a" stroke-width="1"/><path d="M14,3.6H22.2M4.3,13.5V21.8" stroke="#4a4a4a" stroke-width="1"/></g>
<path d="M68,776.8L75,783.6L82,776.8" stroke="#555" stroke-width="3.1"/>
<g transform="translate(97,809)"><path d="M0.8,13.5L6.5,9.5V3.5L10,0.8H20L22.6,3.5V16.5L17,21H0.8Z" fill="#fff" stroke="#444" stroke-width="1.3"/><path d="M0.8,13.5H11V6.5L6.5,9.5M11,6.5H17V21M17,6.5L22.4,3.6M11,13.5L6.5,9.6" stroke="#444" stroke-width="1.1" fill="none"/></g>
</g>
<!-- option key glyph -->
<path d="M2089.5,89.2H2094L2100,101H2105M2098.5,89.2H2105" stroke="#333" stroke-width="1.9" stroke-linecap="butt" stroke-linejoin="miter"/>
<!-- dialog icons -->
<path d="M626,144.5L632.5,151.5L646,136.5" stroke="#fff" stroke-width="4.6" stroke-linecap="butt" stroke-linejoin="miter"/>
<path d="M670.5,138L685.5,152.5M685.5,138L670.5,152.5" stroke="#b0272d" stroke-width="4.4" stroke-linecap="butt"/>
<path d="M379.5,283.5L382.8,287L388.8,279.6" stroke="#fff" stroke-width="2.6"/>
<path d="M409.5,571.5L412.8,575L418.8,567.6" stroke="#fff" stroke-width="2.6"/>
<path d="M639.7,319.4H650.5L645.1,325.2Z M639.7,361H650.5L645.1,366.8Z" fill="#222"/>
<g stroke="#c9c9c9" stroke-width="2.2"><path d="M380.5,400.5L387,407.8L380.5,415"/><path d="M380.5,480.6L387,488L380.5,495.4"/><path d="M380.5,521.6L387,529L380.5,536.4"/><path d="M380.5,603.6L387,611L380.5,618.4"/></g>
<path d="M380,562.8L386.8,570.2L380,577.6" stroke="#333" stroke-width="2.8"/>
<!-- dimension icon -->
<g transform="translate(625,399)"><path d="M12.5,1.2V8.2M9,4.7H16M9.4,10.8H15.6" stroke="#222" stroke-width="1.5" stroke-linecap="butt"/><path d="M1,14V24M24.5,14V24M3,19H22.5" stroke="#2a50ae" stroke-width="1.6"/><path d="M2,19L7,16.2V21.8ZM23.5,19L18.5,16.2V21.8Z" fill="#2a50ae"/></g>
<!-- help -->
<circle cx="683" cy="651.7" r="9.4" fill="#9a9a9a"/><path d="M679.8,649.2C679.8,645.6 686.2,645.6 686.2,649.2C686.2,651.4 683,651.6 683,654" stroke="#fff" stroke-width="2.4" stroke-linecap="butt"/><rect x="681.7" y="655.6" width="2.6" height="2.6" fill="#fff"/>
<!-- bottom bar icons -->
<path d="M85,1119V1141.6M73.7,1130.3H96.3" stroke="#626262" stroke-width="4.6" stroke-linecap="butt"/>
<g transform="translate(136,1114.5)" stroke="#333" stroke-width="1.4"><path d="M0.7,7.5L3.5,5H10V24.5L7.5,27H0.7Z" fill="#fff"/><path d="M0.7,7.5H7.5V27M7.5,7.5L10,5" stroke-width="1"/><path d="M12,3.5L15,0.7H23L26,3.5V24L23,27H12Z" fill="#fff"/><path d="M12,3.5H23V27M23,3.5L26,0.9" stroke-width="1"/></g>
<g transform="translate(437.5,1114.5)" stroke="#333" stroke-width="1.4"><path d="M0.7,0.7H22L27,5.5V27H6L0.7,22Z" fill="#fff"/><path d="M0.7,0.7L6,5.5H27M6,5.5V27" stroke-width="1.1"/><path d="M6,5.5H19V18H6Z" fill="#999" stroke="#555" stroke-width="1"/><path d="M0.7,0.7H14L19,5.5H6Z" fill="#888" stroke="#555" stroke-width="1"/><path d="M0.7,0.7L6,5.5V18L0.7,13Z" fill="#777" stroke="#555" stroke-width="1"/></g>
<!-- protractor -->
<g transform="translate(2160,1078)" stroke="#222" stroke-width="1.4"><path d="M0.8,18.5V15C0.8,6.5 7,0.8 14.8,0.8C22.6,0.8 28.8,6.5 28.8,15V18.5Z" fill="#fff"/><path d="M5.5,15C5.5,10 9.5,6.2 14.8,6.2C20.1,6.2 24.1,10 24.1,15H17.6C17.6,12 12,12 12,15Z" fill="#fff"/><path d="M2.2,12L3.8,12.4M3.6,8L5,8.8M6.4,4.8L7.4,6M10.2,2.8L10.8,4.2M14.8,2V3.6M19.4,2.8L18.8,4.2M23.2,4.8L22.2,6M26,8L24.6,8.8M27.4,12L25.8,12.4" stroke-width="1"/></g>
<!-- window corners -->
<path d="M2205,1140C2205,1143.5 2202.5,1146 2199,1146H2205Z" fill="#222"/><path d="M0,1140.5C0,1144 2,1146 5,1146H0Z" fill="#222"/>
<!-- right tools -->
<g>
<rect x="2157.5" y="476.5" width="60" height="248" fill="#fff" stroke="#aaa" stroke-width="1"/>
<path d="M2157.5,526.5H2205M2157.5,576H2205M2157.5,625.5H2205M2157.5,675H2205" stroke="#aaa" stroke-width="1"/>
<g transform="translate(2167.5,489)"><path d="M3,19.5L11.5,2.8C12.4,1.2 14,0.6 15.6,1.5L19.6,3.8C21,4.8 21.4,6.2 20.6,7.8L13.5,19.5Z" fill="#5f5f5f" stroke="#444" stroke-width=".8"/><path d="M12.6,3.4L20,7.6L18.4,10.6L11,6.4Z" fill="#7d7d7d"/><path d="M12.5,19.5L20.8,9.4C22,8.2 23.6,8 24.8,9L28,11.8C29.2,13 29.2,14.4 28.2,15.6L24.5,19.5Z" fill="#9a9a9a" stroke="#666" stroke-width=".8"/><rect x="0.7" y="19.4" width="28.8" height="9.2" rx="2.6" fill="#fff" stroke="#444" stroke-width="1.2"/><path d="M20.2,19.8H26.8C28.4,19.8 29,20.6 29,22V26C29,27.4 28.4,28.2 26.8,28.2H20.2Z" fill="#cfcfcf"/><path d="M10.6,19.6V28.4M20,19.6V28.4" stroke="#444" stroke-width="1"/><circle cx="5.4" cy="24" r="1.5" stroke="#444" stroke-width="1" fill="none"/></g>
<g transform="translate(2158,476)" stroke-linejoin="round">
<path d="M26.2,67.4L36.7,73.3V85.1L26.2,91L15.7,85.8V74Z" fill="#fff" stroke="#222" stroke-width="1.5"/>
<path d="M15.7,74L26.2,79.2L36.7,73.3M26.2,79.2V91" fill="none" stroke="#222" stroke-width="1.4"/>
<rect x="9.2" y="62.8" width="14.4" height="11.2" fill="#fff"/>
<rect x="9.2" y="62.8" width="14.4" height="4" fill="#9cc4ee"/>
<path d="M9.2,62.8H23.6V74H9.2ZM9.2,66.8H23.6M9.2,70.4H23.6M14,62.8V74M18.8,62.8V74" fill="none" stroke="#2a50ae" stroke-width="1.5"/>
</g>
<g transform="translate(2158,476)" stroke-linejoin="round">
<path d="M24.9,119.8L32.1,123.1V130.9L24.2,134.9L15.7,130.9V123.7Z" fill="#fff" stroke="#222" stroke-width="1.4"/>
<path d="M15.7,123.7L24.2,126.3L32.1,123.1M24.2,126.3V134.9" fill="none" stroke="#222" stroke-width="1.2"/>
<rect x="9.2" y="112.3" width="14.4" height="11.4" fill="#fff"/>
<rect x="9.2" y="112.3" width="14.4" height="4" fill="#888"/>
<path d="M9.2,112.3H23.6V123.7H9.2ZM9.2,116.3H23.6M9.2,120H23.6M14,112.3V123.7M18.8,112.3V123.7" fill="none" stroke="#3a3a3a" stroke-width="1.5"/>
<path d="M14.2,123.9C11.2,123.9 13.4,126.6 9.6,126.8C13.4,127 11.2,138.6 14.6,138.6" fill="none" stroke="#222" stroke-width="1.4"/>
<path d="M32.4,115.2C36.2,115.2 33.4,126.4 37.8,126.8C33.4,127.2 36.2,138.6 32.4,138.6" fill="none" stroke="#222" stroke-width="1.4"/>
</g>
<g transform="translate(2158,626)" stroke-linejoin="round">
<path d="M15.7,22.2L26.2,17.9L31.4,20.1V28.4L38.4,30.7V34.9L27,39.2L15.7,34.9Z" fill="#f2f2f2" stroke="#333" stroke-width="1.2"/>
<path d="M15.7,22.2L26.2,17.9L31.4,20.1L20.9,24.4Z" fill="#dedede"/>
<path d="M20.9,24.4L31.4,20.1V28.6L20.9,32.4Z" fill="#8e8e8e"/>
<path d="M20.9,32.4L31.4,28.6L38.4,30.7L27.5,34.4Z" fill="#dcdcdc"/>
<path d="M27.5,34.4L38.4,30.7V34.9L27,39.2Z" fill="#a4a4a4"/>
<path d="M15.7,22.2L20.9,24.4V32.4L27.5,34.4L27,39.2M20.9,24.4L31.4,20.1M20.9,32.4L31.4,28.6M27.5,34.4L38.4,30.7" fill="none" stroke="#333" stroke-width=".9"/>
<path d="M15.7,22.2L26.2,17.9L31.4,20.1V28.4L38.4,30.7V34.9L27,39.2L15.7,34.9Z" fill="none" stroke="#333" stroke-width="1.2"/>
<path d="M27,13.9L37.9,17M26.6,12.9V16.3M38.2,16V26.2" stroke="#2a50ae" stroke-width="1.2" fill="none"/>
<rect x="9.2" y="27.5" width="4.8" height="5.2" fill="#fff" stroke="#2a50ae" stroke-width="1"/>
<path d="M14,30.1H18.6" stroke="#2a50ae" stroke-width="1.1"/><path d="M19.2,30.1L17.2,28.9V31.3Z" fill="#2a50ae"/>
</g>
<g transform="translate(2158,626)">
<rect x="9.6" y="61.5" width="13.6" height="10.4" fill="#fff"/>
<rect x="9.6" y="61.5" width="13.6" height="4" fill="#888"/>
<path d="M9.6,61.5H23.2V71.6H9.6ZM14.1,61.5V71.6M18.7,61.5V71.6M9.6,65.5H23.2M9.6,68.6H23.2" stroke="#333" stroke-width="1.5" fill="none"/>
<path d="M12,71.5C9.4,76.5 9.6,82 12.8,86.6" stroke="#222" stroke-width="2.4" fill="none" stroke-linecap="round"/>
<path d="M33.6,65.2C38.6,71.5 38.8,80 33.8,86.8" stroke="#222" stroke-width="2.4" fill="none" stroke-linecap="round"/>
<path d="M16.2,79.6C19.5,79 22.5,76.5 24.6,73.6C26,71.6 28,69.6 30.2,70" stroke="#222" stroke-width="2.2" fill="none" stroke-linecap="round"/>
<path d="M22.8,69.8C26.2,69.2 24.6,74 24.8,77C25,80 27,81.8 29.4,80.6" stroke="#222" stroke-width="2.6" fill="none" stroke-linecap="round"/>
<circle cx="16.4" cy="79.8" r="2.1" fill="#222"/><circle cx="30.2" cy="70" r="2.1" fill="#222"/>
</g>
</g>
</svg>
<div class="a" style="left:0;top:0;width:2205px;height:1146px;will-change:transform"><!-- texts -->
<span class="t" style="left:72.0px;top:16.9px;font-size:30.0px;color:#6a6a6a;letter-spacing:1.98px;">onshape</span>
<span class="t" style="left:263.5px;top:20.9px;font-size:32.0px;color:#333;letter-spacing:-0.06px;font-weight:bold;">Week2_3D_Design ZL</span>
<span class="t" style="left:608.0px;top:30.5px;font-size:21.5px;color:#999;letter-spacing:0.60px;">Main</span>
<span class="t" style="left:798.5px;top:25.3px;font-size:20.5px;color:#444;letter-spacing:-0.40px;">0</span>
<span class="t" style="left:870.5px;top:25.3px;font-size:20.5px;color:#444;letter-spacing:-0.40px;">0</span>
<span class="t" style="left:941.5px;top:25.3px;font-size:20.5px;color:#444;letter-spacing:-0.40px;">0</span>
<span class="t" style="left:1562.6px;top:26.2px;font-size:20.0px;color:#333;letter-spacing:0.03px;">Explore Onshape</span>
<span class="t" style="left:1899.6px;top:25.1px;font-size:20.5px;color:#fff;letter-spacing:-0.20px;">Share</span>
<span class="t" style="left:2100.6px;top:25.5px;font-size:20.0px;color:#333;letter-spacing:-0.13px;">Lu Zhao</span>
<span class="t" style="left:216.6px;top:83.1px;font-size:20.5px;color:#333;letter-spacing:-0.05px;">Sketch</span>
<span class="t" style="left:1924.0px;top:82.5px;font-size:20.0px;color:#333;letter-spacing:0.08px;">Search tools...</span>
<span class="t" style="left:2064.0px;top:86.8px;font-size:18.0px;color:#333;letter-spacing:-0.50px;">alt/</span>
<span class="t" style="left:2118.5px;top:86.8px;font-size:18.0px;color:#333;letter-spacing:-0.50px;">c</span>
<span class="t" style="left:129.0px;top:144.2px;font-size:19.5px;color:#8a8a8a;letter-spacing:-0.16px;font-style:italic;">Filter by name or type</span>
<span class="t" style="left:107.0px;top:189.9px;font-size:19.0px;color:#333;letter-spacing:-0.19px;font-weight:bold;">Features ...</span>
<span class="t" style="left:127.7px;top:244.1px;font-size:20.0px;color:#333;letter-spacing:-0.23px;">Origin</span>
<span class="t" style="left:127.7px;top:283.1px;font-size:20.0px;color:#333;letter-spacing:0.25px;">Top</span>
<span class="t" style="left:127.7px;top:322.1px;font-size:20.0px;color:#333;letter-spacing:0.06px;">Front</span>
<span class="t" style="left:127.7px;top:361.1px;font-size:20.0px;color:#333;letter-spacing:-0.14px;">Right</span>
<span class="t" style="left:99.3px;top:400.1px;font-size:20.0px;color:#333;letter-spacing:-0.35px;">Sketch 1</span>
<span class="t" style="left:99.3px;top:439.1px;font-size:20.0px;color:#333;letter-spacing:-0.23px;">Sketch 2</span>
<span class="t" style="left:99.3px;top:478.1px;font-size:20.0px;color:#333;letter-spacing:-0.23px;">Sketch 3</span>
<span class="t" style="left:99.3px;top:517.1px;font-size:20.0px;color:#aaa;letter-spacing:-0.23px;">Sketch 4</span>
<span class="t" style="left:99.3px;top:556.1px;font-size:20.0px;color:#333;letter-spacing:-0.29px;">Extrude 1</span>
<span class="t" style="left:99.3px;top:595.1px;font-size:20.0px;color:#333;letter-spacing:0.01px;">Fillet 1</span>
<span class="t" style="left:99.3px;top:634.1px;font-size:20.0px;color:#333;letter-spacing:0.14px;">Fillet 2</span>
<span class="t" style="left:99.3px;top:673.1px;font-size:20.0px;color:#333;letter-spacing:0.14px;">Fillet 3</span>
<span class="t" style="left:99.3px;top:712.1px;font-size:20.0px;color:#a6272e;letter-spacing:0.08px;font-weight:bold;">Fillet 4</span>
<span class="t" style="left:94.9px;top:771.8px;font-size:20.0px;color:#444;letter-spacing:-0.38px;">Parts (1)</span>
<span class="t" style="left:128.0px;top:810.8px;font-size:20.0px;color:#444;letter-spacing:-0.39px;">Part 1</span>
<div class="a" style="left:90px;top:218.8px;width:200px;height:12px;overflow:hidden"><span class="t" style="left:5.0px;top:-14.4px;font-size:20.0px;color:#333;letter-spacing:-0.08px;">Default geometry</span></div>
<span class="t" style="left:378.6px;top:136.0px;font-size:19.5px;color:#a6272e;letter-spacing:-0.17px;font-weight:bold;">Fillet 4</span>
<span class="t" style="left:421.4px;top:177.9px;font-size:17.5px;color:#2a50ae;letter-spacing:-0.55px;font-weight:bold;">Edge</span>
<span class="t" style="left:566.4px;top:177.9px;font-size:17.5px;color:#333;letter-spacing:0.22px;">Full round</span>
<span class="t" style="left:384.0px;top:229.7px;font-size:17.5px;color:#444;letter-spacing:0.38px;">Entities to fillet</span>
<span class="t" style="left:399.8px;top:274.8px;font-size:20.0px;color:#555;letter-spacing:-0.07px;">Tangent propagation</span>
<span class="t" style="left:376.9px;top:320.1px;font-size:17.0px;color:#555;letter-spacing:0.43px;">Measurement</span>
<span class="t" style="left:503.7px;top:314.2px;font-size:19.5px;color:#222;">Radius</span>
<span class="t" style="left:376.9px;top:361.9px;font-size:17.0px;color:#555;letter-spacing:0.47px;">Control</span>
<span class="t" style="left:452.5px;top:356.5px;font-size:19.5px;color:#222;letter-spacing:0.45px;">Distance</span>
<span class="t" style="left:406.9px;top:403.9px;font-size:17.5px;color:#555;letter-spacing:-0.28px;">Radius</span>
<span class="t" style="left:542.0px;top:401.1px;font-size:19.5px;color:#222;letter-spacing:-0.25px;">0.197 in</span>
<span class="t" style="left:400.0px;top:437.6px;font-size:20.0px;color:#555;letter-spacing:0.16px;">Asymmetric</span>
<span class="t" style="left:429.3px;top:478.6px;font-size:20.0px;color:#555;letter-spacing:0.33px;">Partial fillet</span>
<span class="t" style="left:429.3px;top:519.4px;font-size:20.0px;color:#555;letter-spacing:0.27px;">Variable fillet</span>
<span class="t" style="left:429.3px;top:561.0px;font-size:20.0px;color:#555;letter-spacing:0.03px;">Allow edge overflow</span>
<span class="t" style="left:429.3px;top:601.8px;font-size:20.0px;color:#555;letter-spacing:0.10px;">Smooth fillet corners</span>
<span class="t" style="left:168.7px;top:1119.2px;font-size:21.0px;color:#333;letter-spacing:-0.32px;">Part Studio 1</span>
<span class="t" style="left:471.7px;top:1119.2px;font-size:21.0px;color:#777;letter-spacing:-0.25px;">Assembly 1</span>
</div></body></html>
